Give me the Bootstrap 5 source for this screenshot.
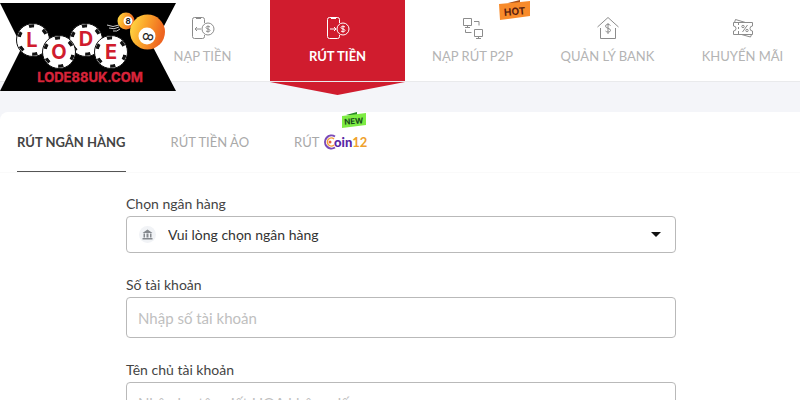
<!DOCTYPE html>
<html lang="vi">
<head>
<meta charset="utf-8">
<meta name="viewport" content="width=device-width, initial-scale=1">
<title>Rút tiền</title>
<link href="https://cdn.jsdelivr.net/npm/bootstrap@5.3.0/dist/css/bootstrap.min.css" rel="stylesheet">
<style>
body{font-family:Lato,"Noto Sans",sans-serif;font-size:13px;line-height:20px;color:#444;background:#f4f5f9;overflow:hidden}
.site-head{padding-left:135px;height:82px;border-bottom:1px solid #e9eaec}
.brand{top:3px;left:0;z-index:3;line-height:0}
.menu-link{flex:0 0 135px;height:81px;padding-top:16px;gap:6px;color:#b4b4b4;font-size:13px;white-space:nowrap}
.menu-link svg{color:#8c8c8c}
.menu-link.active{background:#d01c2e;color:#fff;font-weight:700}
.menu-link.active svg{color:#fff}
.menu-link.active::after{content:"";position:absolute;top:82px;left:0;width:100%;height:13px;background:#d01c2e;clip-path:polygon(0 0,100% 0,50% 100%)}
.tag-hot{top:0;left:93px}
.panel{margin-top:30px;border-radius:8px 0 0 0;min-height:320px}
.tabs{padding-left:17px;gap:45px;border-bottom:1px solid #fafafa}
.tab-link{height:60px;line-height:60px;color:#a9a9a9;font-size:13px}
.tab-link.active{color:#444;font-weight:700;border-bottom:1px solid #555}
.tag-new{top:0;left:47px}
.pay-form{max-width:552px;margin:21px auto 0;padding-left:2px}
.pay-form .form-label{margin-bottom:2px;font-size:14px}
.field{border:1px solid #b9b9b9;border-radius:4px;font-size:15px;color:#333;height:41px;padding:0 11px;background:#fff}
.field::placeholder{color:#c0c0c0;opacity:1}
select.field{height:37px;padding-left:41px;font-size:14px;appearance:none;background-image:none}
.field-group{margin-bottom:22px}
.bank-mark{left:13px;top:10px}
.caret-mark{right:15px;top:16px}
</style>
<script src="https://cdn.jsdelivr.net/npm/bootstrap@5.3.0/dist/js/bootstrap.bundle.min.js"></script>
</head>
<body>
<header class="site-head bg-white position-relative">
<a class="brand position-absolute" href="#" aria-label="LODE88UK.COM">
<svg width="176" height="88" viewBox="0 3 176 88">
<defs>
<linearGradient id="gold" x1="0" x2="1" y1="0" y2=".3"><stop stop-color="#ffe24a"/><stop offset=".45" stop-color="#fba92c"/><stop offset="1" stop-color="#ee6420"/></linearGradient>
<g id="chip"><circle r="16.5" fill="#fff" stroke="#111" stroke-width="1"/><circle r="14" fill="none" stroke="#111" stroke-width="3.6" stroke-dasharray="5 9.66" transform="rotate(12)"/><circle r="12.5" fill="#fff"/></g>
</defs>
<path d="M0 3H176L153 47L176 91H0L22 47Z" fill="#000"/>
<use href="#chip" x="33" y="40"/><use href="#chip" x="86" y="40"/><use href="#chip" x="59" y="52"/><use href="#chip" x="111" y="52"/>
<g font-family="Inter,sans-serif" font-weight="700" font-size="20" fill="#d01c2e" text-anchor="middle"><text x="32" y="47">L</text><text x="59" y="59">O</text><text x="86" y="46">D</text><text x="111" y="59">E</text></g>
<text x="90" y="82" text-anchor="middle" font-family="Inter,sans-serif" font-weight="700" font-size="13" fill="#d8243a" stroke="#d8243a" stroke-width=".4">LODE88UK.COM</text>
<path d="M107 25q6 3 12 0M109 28q5 2 10-1M113 31q4 1 7-2" fill="none" stroke="#fff" stroke-width=".8"/>
<circle cx="126" cy="21" r="8.5" fill="url(#gold)"/><circle cx="128" cy="21" r="4.5" fill="#fff"/><text x="128" y="24" font-size="8" font-weight="700" text-anchor="middle" fill="#222" font-family="Inter">8</text>
<circle cx="147.500" cy="32" r="17.500" fill="url(#gold)"/><circle cx="147" cy="36" r="8.500" fill="#fff"/><text transform="translate(143 36) rotate(100)" font-size="14" text-anchor="middle" fill="#222" font-family="Inter">8</text>
</svg></a>
<nav class="d-flex" aria-label="Giao dịch">
<a href="#" class="menu-link d-flex flex-column align-items-center text-decoration-none position-relative"><svg width="24" height="24" viewBox="0 0 24 24" fill="none" stroke="currentColor"><path d="M13.500 7V3.500a2 2 0 0 0-2-2h-8a2 2 0 0 0-2 2v17a2 2 0 0 0 2 2h8a2 2 0 0 0 2-2V19M5 2.500h5M10 13H4m2-2-2 2 2 2"/><circle cx="17" cy="13" r="6"/><path d="M19 11c-1-1-4-1-4 .5 0 2 4 1 4 3 0 1.500-3 1.500-4 .5M17 9.500v7"/></svg><span>NẠP TIỀN</span></a>
<a href="#" aria-current="page" class="menu-link active d-flex flex-column align-items-center text-decoration-none position-relative"><svg width="24" height="24" viewBox="0 0 24 24" fill="none" stroke="currentColor"><path d="M13.500 7V3.500a2 2 0 0 0-2-2h-8a2 2 0 0 0-2 2v17a2 2 0 0 0 2 2h8a2 2 0 0 0 2-2V19M5 2.500h5M4 13h6m-2-2 2 2-2 2"/><circle cx="17" cy="13" r="6"/><path d="M19 11c-1-1-4-1-4 .5 0 2 4 1 4 3 0 1.500-3 1.500-4 .5M17 9.500v7"/></svg><span>RÚT TIỀN</span></a>
<a href="#" class="menu-link d-flex flex-column align-items-center text-decoration-none position-relative"><svg width="24" height="24" viewBox="0 0 24 24" fill="none" stroke="currentColor"><path d="M2.500 2.500h8v7h-8zM4 11.500h5M6.500 9.500v2M13.500 13.500h8v7h-8zM15 22.500h5M17.500 20.500v2M13 5.500h5v4M4.500 13.500v3h6"/></svg><span>NẠP RÚT P2P</span>
<svg class="tag-hot position-absolute" width="34" height="21" viewBox="0 0 34 21"><path d="M10 3L22 0v5z" fill="#a8511b"/><path d="M1 4L32 1V16L2 20Z" fill="#f88b2b"/><text x="17" y="15" transform="rotate(-5 17 15)" text-anchor="middle" font-size="10" font-weight="700" font-family="Inter" fill="#5b2110">HOT</text></svg></a>
<a href="#" class="menu-link d-flex flex-column align-items-center text-decoration-none position-relative"><svg width="24" height="24" viewBox="0 0 24 24" fill="none" stroke="currentColor"><path d="M1.500 11L12 1.500 22.500 11M4.500 12v10.500h15V12M14.500 9.500c-1-1.500-5-1.500-5 .5 0 3 5 1.500 5 4.500 0 2-4 2-5 .5M12 7v11"/></svg><span>QUẢN LÝ BANK</span></a>
<a href="#" class="menu-link d-flex flex-column align-items-center text-decoration-none position-relative"><svg width="24" height="24" viewBox="0 0 24 24" fill="none" stroke="currentColor"><path d="M2.500 6.500h19v3.500a2.500 2.500 0 0 0 0 5v3.500h-19V15a2.500 2.500 0 0 0 0-5zM3.500 6.500l1-3 10 3M20.500 18.500l-1 2.500-9-2.500M7.500 7v2m0 2v2m0 2v3M16.500 9l-5 7"/><circle cx="12" cy="10.500" r="1.200"/><circle cx="16" cy="14.500" r="1.200"/></svg><span>KHUYẾN MÃI</span></a>
</nav>
</header>
<main class="panel bg-white">
<nav class="tabs d-flex" aria-label="Hình thức rút">
<a href="#" class="tab-link active text-decoration-none" aria-current="page">RÚT NGÂN HÀNG</a>
<a href="#" class="tab-link text-decoration-none">RÚT TIỀN ẢO</a>
<a href="#" class="tab-link d-flex align-items-center text-decoration-none position-relative">RÚT
<svg class="ms-1" width="46" height="18" viewBox="0 0 46 18"><path d="M12 3.500A6.500 6.500 0 1 0 12 14.500" fill="none" stroke="#7949b7" stroke-width="2"/><path d="M11 6A4 4 0 1 0 11 12" fill="none" stroke="#f2a13a" stroke-width="1.500"/><circle cx="7" cy="9" r="1.500" fill="#e8623b"/><text x="11" y="14" font-family="Lato,sans-serif" font-size="13" font-weight="900" fill="#5726a5">oin<tspan font-weight="700" fill="#efa12c">12</tspan></text></svg>
<svg class="tag-new position-absolute" width="27" height="16" viewBox="0 0 27 16"><path d="M5 3L16 0v4z" fill="#278826"/><path d="M1 4L25 1V13L1 16Z" fill="#7eec43"/><text x="13" y="12" transform="rotate(-5 13 12)" text-anchor="middle" font-size="8" font-weight="700" font-family="Inter" fill="#174c1b">NEW</text></svg></a>
</nav>
<form class="pay-form">
<div class="field-group"><label class="form-label" for="bank">Chọn ngân hàng</label>
<div class="position-relative"><select id="bank" class="field w-100 d-block"><option>Vui lòng chọn ngân hàng</option></select>
<svg class="bank-mark position-absolute pe-none" width="17" height="17" viewBox="0 0 17 17"><circle cx="8.500" cy="8.500" r="8.500" fill="#f1f3f6"/><path d="M3.500 7l5-3.500 5 3.500zM4.500 7.500h1.500v4H4.500zM7.500 7.500h2v4h-2zM11 7.500h1.500v4H11zM3.500 12h10v1.500h-10z" fill="#85898e"/></svg>
<svg class="caret-mark position-absolute pe-none" width="10" height="5" viewBox="0 0 10 5"><path d="M0 0h10L5 5z" fill="#111"/></svg></div></div>
<div class="field-group"><label class="form-label" for="acct">Số tài khoản</label><input id="acct" type="text" class="field w-100 d-block" placeholder="Nhập số tài khoản"></div>
<div class="field-group"><label class="form-label" for="owner">Tên chủ tài khoản</label><input id="owner" type="text" class="field w-100 d-block" placeholder="Nhập họ tên viết HOA không dấu"></div>
</form>
</main>
</body>
</html>
